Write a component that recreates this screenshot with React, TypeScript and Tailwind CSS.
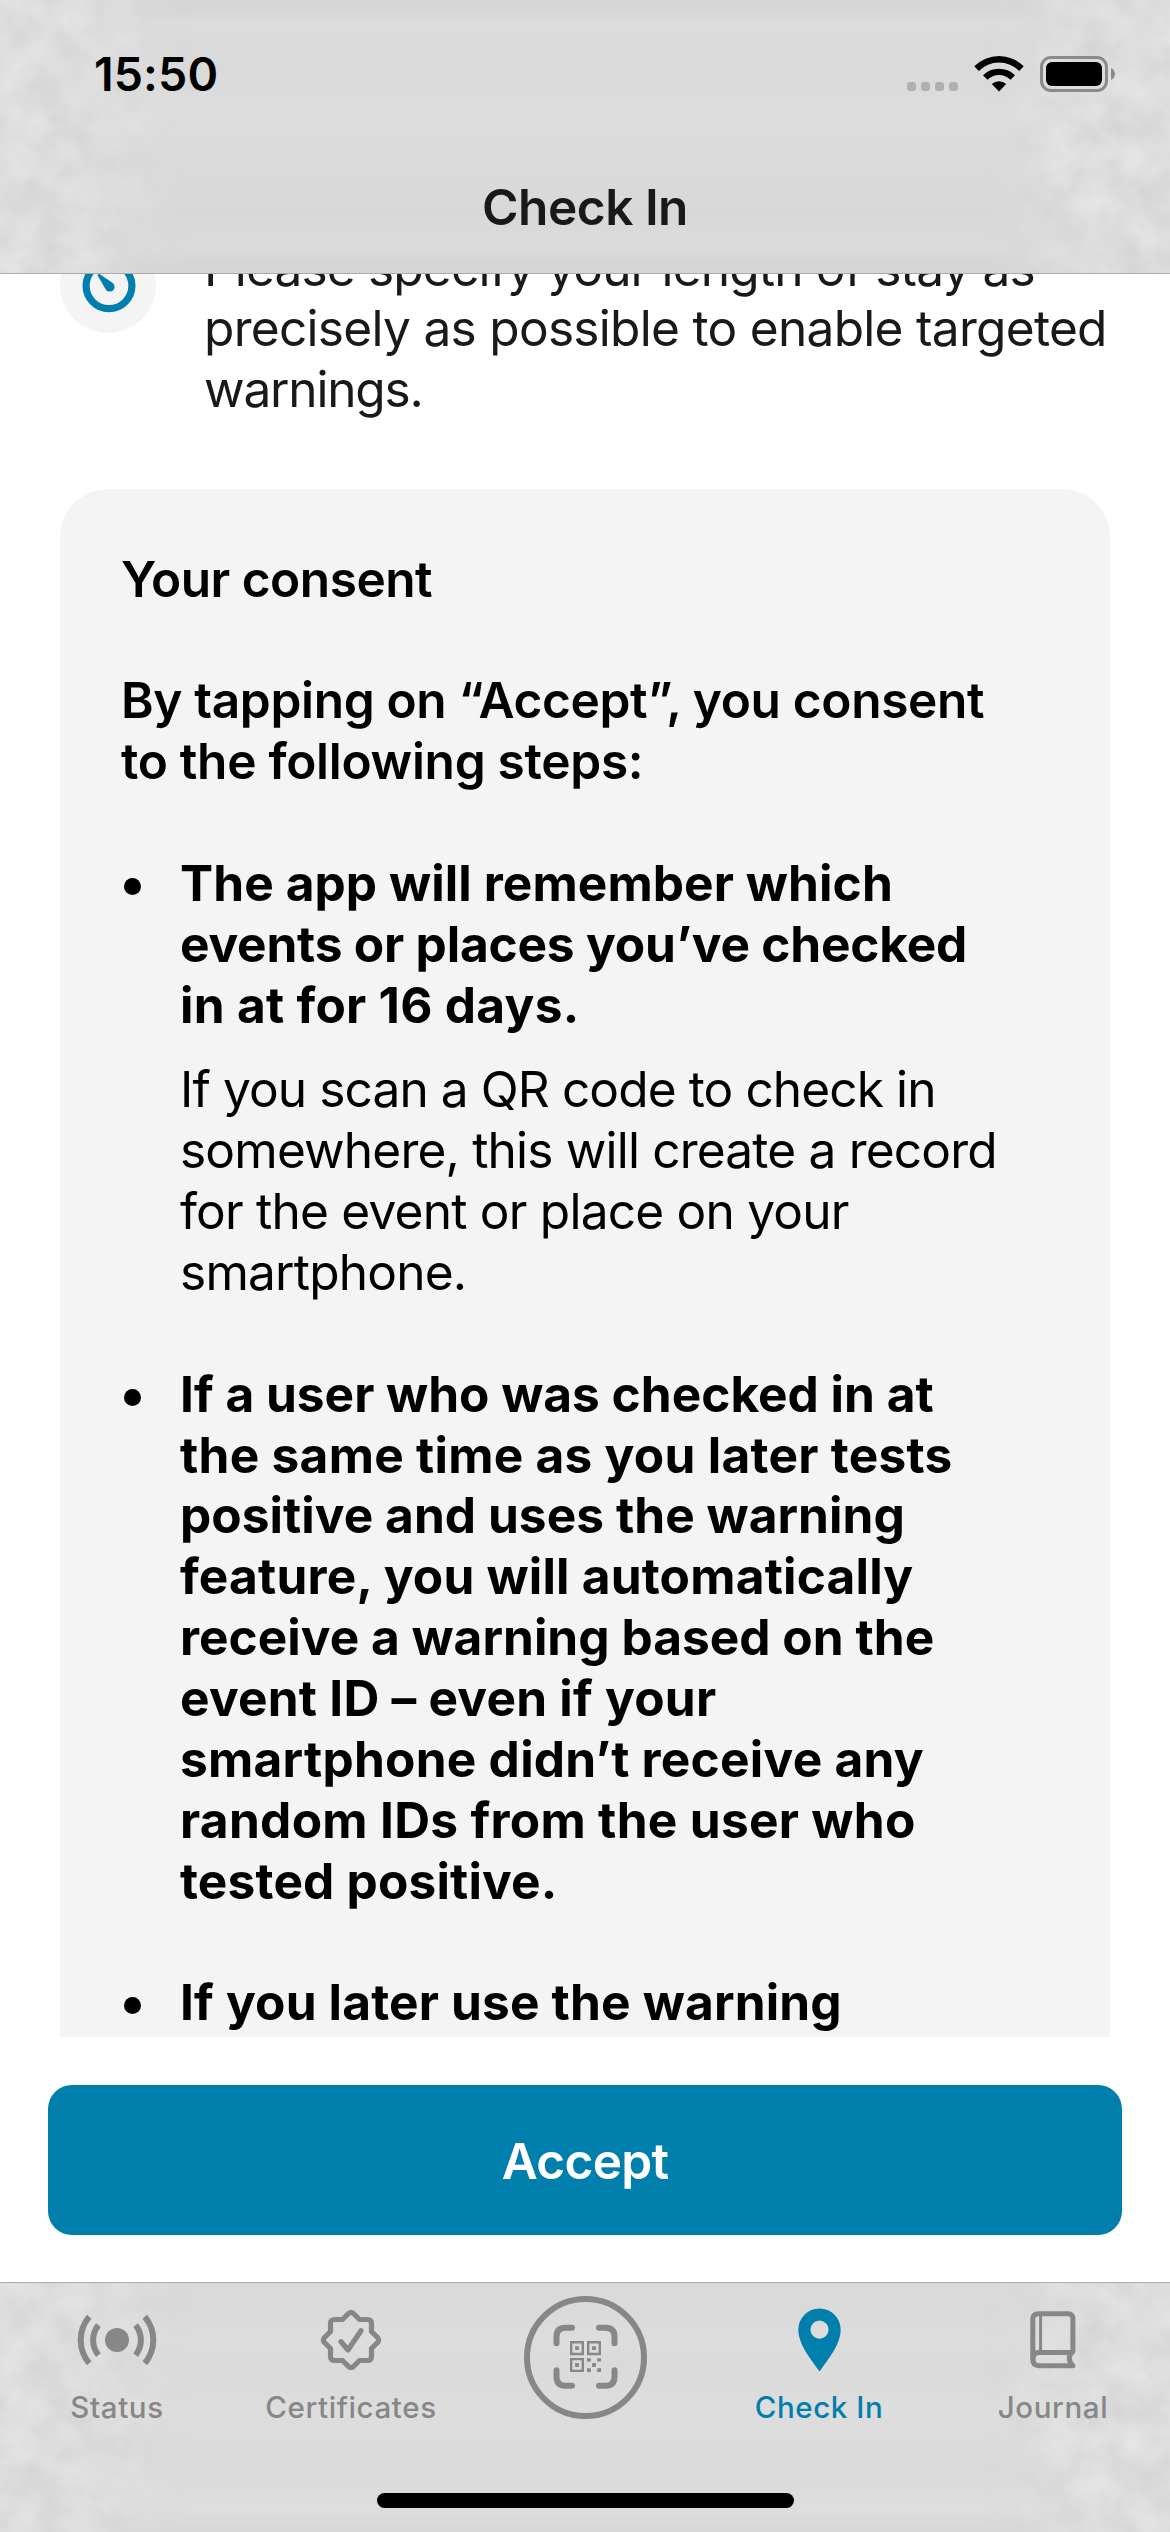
import type { ReactNode } from "react";

function Haze({ id, height }: { id: string; height: number }) {
  return (
    <svg
      className="pointer-events-none absolute inset-0 h-full w-full"
      viewBox={`0 0 1170 ${height}`}
      preserveAspectRatio="none"
      aria-hidden="true"
    >
      <defs>
        <filter id={`${id}-noise`} x="0" y="0" width="100%" height="100%" colorInterpolationFilters="sRGB">
          <feTurbulence type="fractalNoise" baseFrequency="0.028" numOctaves={3} seed={7} />
          <feColorMatrix values="0.1 0 0 0 0.815  0.1 0 0 0 0.815  0.1 0 0 0 0.815  0 0 0 0 1" />
        </filter>
        <linearGradient id={`${id}-fade`} x1="0" x2="1" y1="0" y2="0">
          <stop offset="0" stopColor="#fff" />
          <stop offset="0.07" stopColor="#fff" />
          <stop offset="0.16" stopColor="#000" />
          <stop offset="0.84" stopColor="#000" />
          <stop offset="0.93" stopColor="#fff" />
          <stop offset="1" stopColor="#fff" />
        </linearGradient>
        <mask id={`${id}-mask`}>
          <rect width="1170" height={height} fill={`url(#${id}-fade)`} />
        </mask>
      </defs>
      <g mask={`url(#${id}-mask)`}>
        <rect width="1170" height={height} filter={`url(#${id}-noise)`} />
      </g>
    </svg>
  );
}

function WifiIcon() {
  return (
    <svg className="h-[37px] w-[50px]" viewBox="0 0 50 37">
      <path d="M0.3 11.3A35 35 0 0 1 49.7 11.3L45.2 15.9A28.6 28.6 0 0 0 4.8 15.9Z" />
      <path d="M9 20.2A22.8 22.8 0 0 1 41 20.2L36.5 24.8A16.3 16.3 0 0 0 13.5 24.8Z" />
      <path d="M17.8 29.1A10.4 10.4 0 0 1 32.2 29.1L25 36.4Z" />
    </svg>
  );
}

function StatusBar() {
  return (
    <div className="relative flex h-[141px] items-start justify-between pl-[94px] pr-[55px]">
      <span className="mt-[46px] text-[46.5px] font-semibold leading-[56px] tracking-[0.1px] text-black">
        15:50
      </span>
      <div className="mt-[55px] flex items-start">
        <div className="mt-[27px] flex gap-[5px]">
          <i className="h-[9px] w-[9px] rounded-[3px] bg-[#b0b0b0]" />
          <i className="h-[9px] w-[9px] rounded-[3px] bg-[#b0b0b0]" />
          <i className="h-[9px] w-[9px] rounded-[3px] bg-[#b0b0b0]" />
          <i className="h-[9px] w-[9px] rounded-[3px] bg-[#b0b0b0]" />
        </div>
        <div className="ml-[16px]">
          <WifiIcon />
        </div>
        <div className="ml-[16px] mt-px flex items-center">
          <div className="h-[36px] w-[68px] rounded-[11px] border-[3px] border-[#8a8a8a] p-[3px]">
            <div className="h-full w-full rounded-[6px] bg-black" />
          </div>
          <svg className="ml-[3px] h-[12px] w-[4px]" viewBox="0 0 4 12">
            <path d="M0 0C5.3 2 5.3 10 0 12Z" fill="#8a8a8a" />
          </svg>
        </div>
      </div>
    </div>
  );
}

function TimerIcon() {
  return (
    <div className="flex h-24 w-24 shrink-0 items-center justify-center rounded-full bg-[#f4f4f4]">
      <svg className="h-24 w-24" viewBox="0 0 96 96">
        <circle cx="49" cy="48.8" r="22.9" fill="none" stroke="#007fad" strokeWidth="7.2" />
        <path
          d="M37.8 38.8C37.2 37.6 38.6 36.6 39.8 37.3L52.2 45.6C56.8 49.4 54.2 54.6 50 54.6C47.4 54.6 46 53 45.2 51.4Z"
          fill="#007fad"
        />
      </svg>
    </div>
  );
}

/** A text row and its tracking class. */
type Line = [text: string, tracking: string];

function Lines({ lines, className }: { lines: Line[]; className: string }) {
  return (
    <p className={className}>
      {lines.map(([text, tracking]) => (
        <span key={text} className={`block whitespace-nowrap ${tracking}`}>
          {text}
        </span>
      ))}
    </p>
  );
}

function Bullet({ lines, children }: { lines: Line[]; children?: ReactNode }) {
  return (
    <li className="mt-[60.86px] flex">
      <span className="flex h-[60.86px] w-[59px] shrink-0 items-center pl-[3px]">
        <i className="mt-[6px] h-[17px] w-[17px] rounded-full bg-black" />
      </span>
      <div>
        <Lines lines={lines} className="font-bold" />
        {children}
      </div>
    </li>
  );
}

function StatusIcon() {
  return (
    <svg className="h-[64px] w-[84px]" viewBox="-42 -32 84 64" fill="none" stroke="#878787" strokeWidth="6">
      <circle r="12" fill="#878787" stroke="none" />
      <path d="M-18.6 -15A24 24 0 0 0 -18.6 15M18.6 -15A24 24 0 0 1 18.6 15" />
      <path d="M-27.8 -23.3A36.2 36.2 0 0 0 -27.8 23.3M27.8 -23.3A36.2 36.2 0 0 1 27.8 23.3" />
    </svg>
  );
}

function CertificateIcon() {
  return (
    <svg
      className="h-[64px] w-[64px]"
      viewBox="-32 -32 64 64"
      fill="none"
      stroke="#878787"
      strokeWidth="5.2"
      strokeLinecap="round"
      strokeLinejoin="round"
    >
      <path d="M-16.5 -20.5H-8.5L-3 -26Q0 -29.4 3 -26L8.5 -20.5H16.5Q20.5 -20.5 20.5 -16.5V-8.5L26 -3Q29.4 0 26 3L20.5 8.5V16.5Q20.5 20.5 16.5 20.5H8.5L3 26Q0 29.4 -3 26L-8.5 20.5H-16.5Q-20.5 20.5 -20.5 16.5V8.5L-26 3Q-29.4 0 -26 -3L-20.5 -8.5V-16.5Q-20.5 -20.5 -16.5 -20.5Z" />
      <path d="M-10 1.7L-3 10L10 -9.3" />
    </svg>
  );
}

function ScanIcon() {
  return (
    <svg className="h-[123px] w-[123px]" viewBox="-61.5 -61.5 123 123" fill="none" stroke="#878787">
      <circle r="58.5" strokeWidth="6" />
      <g transform="translate(0 -0.8)">
        <path
          strokeWidth="6"
          strokeLinecap="round"
          d="M-29 -13.5V-20Q-29 -29 -20 -29H-13.5M13.5 -29H20Q29 -29 29 -20V-13.5M29 13.5V20Q29 29 20 29H13.5M-13.5 29H-20Q-29 29 -29 20V13.5"
        />
        <path strokeWidth="2.4" d="M-14.3 -14.5h11.6v11.8h-11.6zM2.7 -14.5h11.6v11.8h-11.6zM-14.3 2.4h11.6v11.8h-11.6z" />
        <path
          fill="#878787"
          stroke="none"
          d="M-10.4 -10.4h3.8v3.8h-3.8zM6.6 -10.4h3.8v3.8h-3.8zM-10.4 6.4h3.8v3.8h-3.8zM6.6 6.4h3.8v3.8h-3.8zM1.5 1.6h3.8v3.2h-3.8zM11.7 1.6h3.8v3.2h-3.8zM1.5 11.6h3.8v3.6h-3.8zM11.7 11.6h3.8v3.6h-3.8z"
        />
      </g>
    </svg>
  );
}

function PinIcon() {
  return (
    <svg className="h-[64px] w-[43px]" viewBox="0 0 43 64" fill="#007fad">
      <path
        fillRule="evenodd"
        d="M21.5 0.5A21.2 21.2 0 0 0 0.3 21.7C0.3 35.5 11 49 21.5 63.4C32 49 42.7 35.5 42.7 21.7A21.2 21.2 0 0 0 21.5 0.5ZM21.5 12.5A9.1 9.1 0 1 1 21.5 30.7A9.1 9.1 0 0 1 21.5 12.5Z"
      />
    </svg>
  );
}

function JournalIcon() {
  return (
    <svg
      className="h-[58px] w-[46px]"
      viewBox="0 0 46 58"
      fill="none"
      stroke="#878787"
      strokeWidth="5"
      strokeLinecap="round"
      strokeLinejoin="round"
    >
      <path d="M42.9 39.8V7.6Q42.9 2.7 38 2.7H8.5Q2.8 2.7 2.8 8.5V48Q2.8 54.7 9 54.7H42.9Q35.6 47 42.9 40.3" />
      <path d="M3 48Q3 41.4 9 41.4H41.5" />
      <path d="M10.6 4V40" strokeWidth="3" strokeLinecap="butt" />
    </svg>
  );
}

function Tab({ icon, label, active }: { icon: ReactNode; label: string; active?: boolean }) {
  return (
    <div className="flex flex-1 flex-col items-center pt-[25px]">
      <div className="flex h-[64px] items-center">{icon}</div>
      <span
        className={`mt-[17px] whitespace-nowrap text-[29.5px] font-medium leading-[36px] tracking-[0.6px] ${
          active ? "text-[#007fad]" : "text-[#878787]"
        }`}
      >
        {label}
      </span>
    </div>
  );
}

export default function App() {
  return (
    <div className="flex h-[2532px] w-[1170px] flex-col overflow-hidden bg-white font-['Inter',sans-serif] text-[49.6px] leading-[60.86px] [font-optical-sizing:none]">
      <header className="relative z-10 h-[274px] shrink-0 border-b border-[#ababab] bg-[linear-gradient(to_bottom,#d5d5d5_0px,#d6d6d6_12px,#dddddd_22px,#dadada_38px,#dadada_80px,#dddddd_105px,#dbdbdb_160px,#d8d8d8_215px,#dbdbdb_245px,#d5d5d5_265px,#d5d5d5_273px)]">
        <Haze id="header" height={273} />
        <StatusBar />
        <h1 className="relative mt-[35.5px] text-center font-semibold tracking-[-0.5px] text-[#17191a]">Check In</h1>
      </header>

      <main className="h-[1763px] shrink-0 overflow-hidden px-[60px]">
        <div className="-mt-[37px] flex">
          <TimerIcon />
          <Lines
            className="ml-[48px] mt-[0.5px] text-[#17191a]"
            lines={[
              ["Please specify your length of stay as", "tracking-[-0.85px]"],
              ["precisely as possible to enable targeted", "tracking-[-0.72px]"],
              ["warnings.", "tracking-[-1.2px]"],
            ]}
          />
        </div>
        <section className="mt-[69px] rounded-t-[48px] bg-[#f4f4f4] pb-[60px] pl-[61px] pt-[59.5px] text-black">
          <h2 className="font-semibold tracking-[-0.5px]">Your consent</h2>
          <Lines
            className="mt-[60.86px] font-semibold"
            lines={[
              ["By tapping on “Accept”, you consent", "tracking-[-0.35px]"],
              ["to the following steps:", "tracking-[-0.3px]"],
            ]}
          />
          <ul>
            <Bullet
              lines={[
                ["The app will remember which", "tracking-[0.09px]"],
                ["events or places you’ve checked", "tracking-[-0.2px]"],
                ["in at for 16 days.", "tracking-[0.28px]"],
              ]}
            >
              <Lines
                className="mt-[24px]"
                lines={[
                  ["If you scan a QR code to check in", "tracking-[-0.9px]"],
                  ["somewhere, this will create a record", "tracking-[-0.82px]"],
                  ["for the event or place on your", "tracking-[-0.79px]"],
                  ["smartphone.", "tracking-[-0.8px]"],
                ]}
              />
            </Bullet>
            <Bullet
              lines={[
                ["If a user who was checked in at", "tracking-[0px]"],
                ["the same time as you later tests", "tracking-[0.27px]"],
                ["positive and uses the warning", "tracking-[0.05px]"],
                ["feature, you will automatically", "tracking-[0.2px]"],
                ["receive a warning based on the", "tracking-[0.02px]"],
                ["event ID – even if your", "tracking-[0.24px]"],
                ["smartphone didn’t receive any", "tracking-[0.25px]"],
                ["random IDs from the user who", "tracking-[0.3px]"],
                ["tested positive.", "tracking-[0.18px]"],
              ]}
            />
            <Bullet lines={[["If you later use the warning", "tracking-[0.17px]"]]} />
          </ul>
        </section>
      </main>

      <div className="h-[245px] shrink-0 px-[48px] pt-[48px]">
        <button className="flex h-[150px] w-full items-center justify-center rounded-[24px] bg-[#007fad] pt-[2px] font-semibold tracking-[-0.7px] text-white">
          Accept
        </button>
      </div>

      <nav className="relative h-[250px] shrink-0 border-t border-[#ababab] bg-[linear-gradient(to_bottom,#dadada_0px,#dadada_30px,#dddddd_60px,#dadada_80px,#dddddd_130px,#dadada_190px,#dedede_225px,#d7d7d7_249px)]">
        <Haze id="tabs" height={249} />
        <div className="relative flex h-[210px]">
          <Tab icon={<StatusIcon />} label="Status" />
          <Tab icon={<CertificateIcon />} label="Certificates" />
          <div className="flex flex-1 justify-center pt-[13px]">
            <ScanIcon />
          </div>
          <Tab icon={<PinIcon />} label="Check In" active />
          <Tab icon={<JournalIcon />} label="Journal" />
        </div>
        <div className="relative mx-auto h-[15px] w-[417px] rounded-full bg-black" />
      </nav>
    </div>
  );
}
